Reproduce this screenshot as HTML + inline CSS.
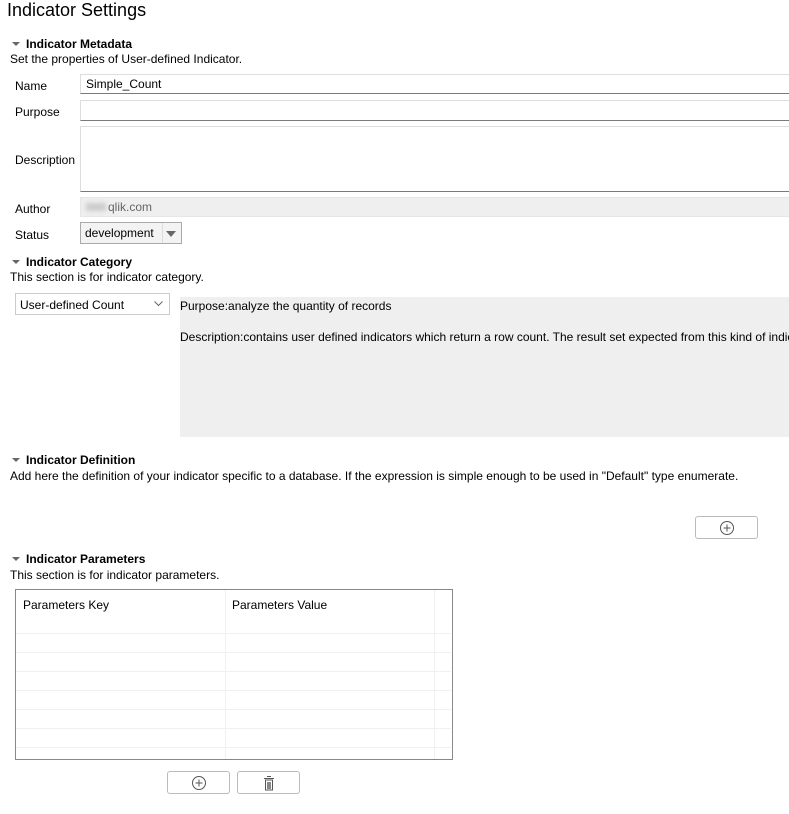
<!DOCTYPE html>
<html><head><meta charset="utf-8"><style>
*{margin:0;padding:0;box-sizing:border-box}
body{width:789px;height:814px;background:#fff;font-family:"Liberation Sans",sans-serif;font-size:12px;color:#000;position:relative;overflow:hidden}
.a{position:absolute;white-space:nowrap}
h1{position:absolute;left:7px;top:0px;font-size:18px;font-weight:normal}
.sec{font-weight:bold;font-size:12px}
.tri{display:inline-block;width:0;height:0;border-left:4px solid transparent;border-right:4px solid transparent;border-top:4px solid #666;margin-right:6px;vertical-align:2px}
.inp{position:absolute;left:80px;right:0;border:1px solid #ddd;border-bottom-color:#7a7a7a;border-right:none;background:#fff;padding-left:5px}
.btn{position:absolute;width:63px;height:23px;border:1px solid #bbb;border-radius:3px;background:#fff}
.btn svg{position:absolute;left:23px;top:3px}
.hl{position:absolute;left:16px;width:435px;height:1px;background:#eef0f2}
</style></head><body>
<h1>Indicator Settings</h1>

<div class="a sec" style="left:12px;top:37px"><span class="tri"></span>Indicator Metadata</div>
<div class="a" style="left:10px;top:52px">Set the properties of User-defined Indicator.</div>

<div class="a" style="left:15px;top:79px">Name</div>
<div class="inp" style="top:74px;height:20px;line-height:19px">Simple_Count</div>
<div class="a" style="left:15px;top:105px">Purpose</div>
<div class="inp" style="top:100px;height:21px"></div>
<div class="a" style="left:15px;top:153px">Description</div>
<div class="inp" style="top:126px;height:66px"></div>
<div class="a" style="left:15px;top:202px">Author</div>
<div class="inp" style="top:197px;height:20px;background:#efefef;border-color:#e6e6e6;color:#666;line-height:19px"><span style="display:inline-block;width:20px;height:8px;background:#ccc;filter:blur(2px);margin-right:2px"></span>qlik.com</div>
<div class="a" style="left:15px;top:228px">Status</div>
<div class="a" style="left:80px;top:222px;width:102px;height:22px;border:1px solid #aaa;background:#f3f3f3;padding:3px 0 0 4px">development<span style="position:absolute;left:81px;top:0;width:1px;height:20px;background:#ddd"></span><span style="position:absolute;left:85px;top:8px;width:0;height:0;border-left:5px solid transparent;border-right:5px solid transparent;border-top:6px solid #666"></span></div>

<div class="a sec" style="left:12px;top:255px"><span class="tri"></span>Indicator Category</div>
<div class="a" style="left:10px;top:270px">This section is for indicator category.</div>
<div class="a" style="left:15px;top:293px;width:155px;height:22px;border:1px solid #ccc;padding:4px 0 0 4px">User-defined Count<svg style="position:absolute;right:6px;top:7px" width="9" height="6"><path d="M0.5 0.5L4.5 4.5L8.5 0.5" stroke="#666" fill="none"/></svg></div>
<div class="a" style="left:180px;top:297px;right:0;height:140px;background:#efefef"></div>
<div class="a" style="left:180px;top:299px">Purpose:analyze the quantity of records</div>
<div class="a" style="left:180px;top:330px">Description:contains user defined indicators which return a row count. The result set expected from this kind of indicator</div>

<div class="a sec" style="left:12px;top:453px"><span class="tri"></span>Indicator Definition</div>
<div class="a" style="left:10px;top:469px">Add here the definition of your indicator specific to a database. If the expression is simple enough to be used in "Default" type enumerate.</div>
<div class="btn" style="left:695px;top:516px"><svg width="16" height="16"><circle cx="8" cy="8" r="6.5" stroke="#555" fill="none"/><path d="M8 4.5V11.5M4.5 8H11.5" stroke="#555"/></svg></div>

<div class="a sec" style="left:12px;top:552px"><span class="tri"></span>Indicator Parameters</div>
<div class="a" style="left:10px;top:568px">This section is for indicator parameters.</div>
<div class="a" style="left:15px;top:589px;width:438px;height:171px;border:1px solid #888"></div>
<div class="a" style="left:23px;top:598px">Parameters Key</div>
<div class="a" style="left:232px;top:598px">Parameters Value</div>
<div class="a" style="left:225px;top:590px;width:1px;height:169px;background:#eef0f2"></div>
<div class="a" style="left:434px;top:590px;width:1px;height:169px;background:#eef0f2"></div>
<div class="hl" style="top:633px"></div><div class="hl" style="top:652px"></div><div class="hl" style="top:671px"></div><div class="hl" style="top:690px"></div><div class="hl" style="top:709px"></div><div class="hl" style="top:728px"></div><div class="hl" style="top:747px"></div>

<div class="btn" style="left:167px;top:771px"><svg width="16" height="16"><circle cx="8" cy="8" r="6.5" stroke="#555" fill="none"/><path d="M8 4.5V11.5M4.5 8H11.5" stroke="#555"/></svg></div>
<div class="btn" style="left:237px;top:771px"><svg width="16" height="16"><path d="M6 1.5H10M3 3.5H13" stroke="#555"/><rect x="4.5" y="5" width="7" height="10" fill="#fff" stroke="#555"/><rect x="6" y="7" width="4" height="7" fill="#888"/></svg></div>
</body></html>
